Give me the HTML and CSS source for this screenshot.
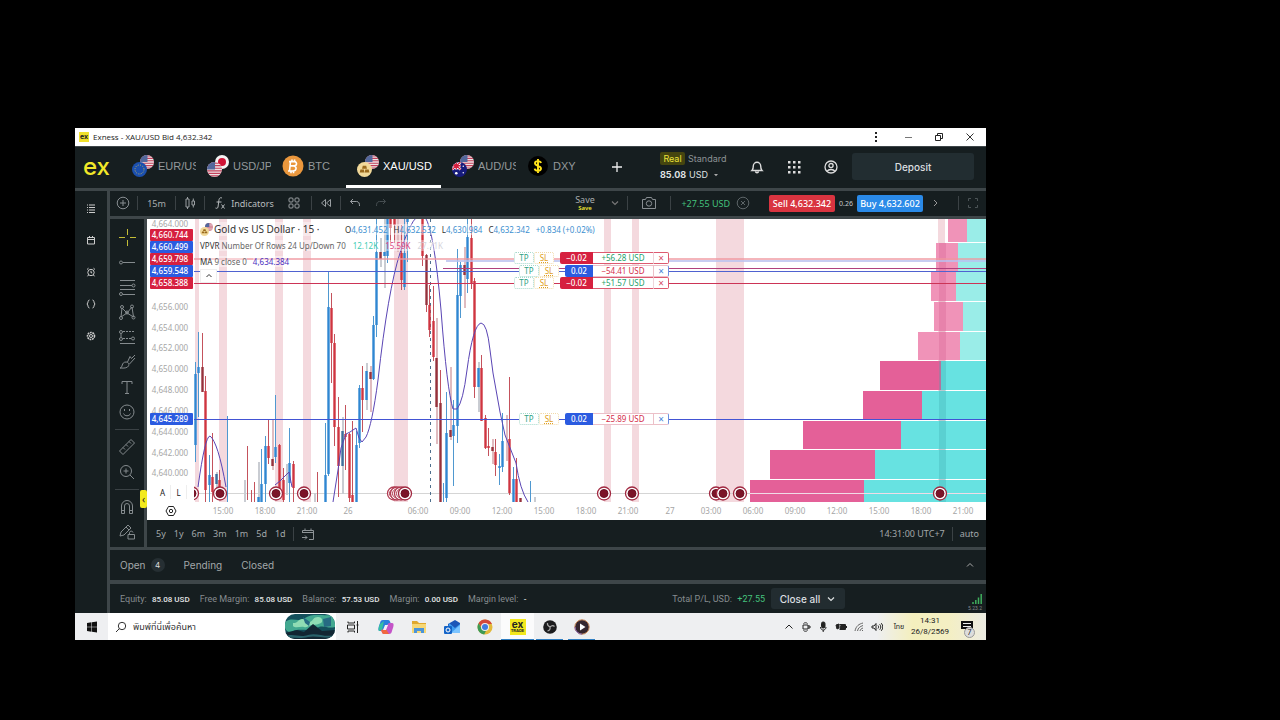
FILE: index.html
```html
<!DOCTYPE html>
<html lang="en">
<head>
<meta charset="utf-8">
<title>Exness - XAU/USD Bid 4,632.342</title>
<link rel="stylesheet" href="styles.css">
</head>
<body>
<svg class="defs" aria-hidden="true">
  <defs>
    <clipPath id="disc"><circle cx="7" cy="7" r="7"/></clipPath>
    <symbol id="us" viewBox="0 0 14 14"><g clip-path="url(#disc)"><path fill="#eee3e6" d="M0 0h14v14H0z"/><path stroke="#c2405a" stroke-width="1.1" d="M0 1h14M0 3.4h14M0 5.8h14M0 8.2h14M0 10.6h14M0 13h14"/><path fill="#53689c" d="M0 0h7.5v7H0z"/></g></symbol>
    <symbol id="eu" viewBox="0 0 14 14"><circle cx="7" cy="7" r="7" fill="#1b4fae"/><circle cx="7" cy="7" r="4.2" fill="none" stroke="#d9c14a" stroke-width=".8" stroke-dasharray=".9 1.3"/></symbol>
    <symbol id="jp" viewBox="0 0 14 14"><circle cx="7" cy="7" r="7" fill="#f4f4f4"/><circle cx="7" cy="7" r="4" fill="#cf1436"/></symbol>
    <symbol id="gold" viewBox="0 0 14 14"><circle cx="7" cy="7" r="7" fill="#f1d99a"/><path fill="#9a6a1d" d="M5.4 3.6h3.2l.7 2.8H4.7zM3.2 7h3.2l.5 2.8H2.5zM7.7 7h3.2l.7 2.8H7.2z"/></symbol>
    <symbol id="au" viewBox="0 0 14 14"><g clip-path="url(#disc)"><path fill="#171b7c" d="M0 0h14v14H0z"/><path stroke="#fff" stroke-width="2.4" d="M0 0l8 7M8 0L0 7M4 0v7M0 3.5h8"/><path stroke="#d5203f" stroke-width="1.2" d="M0 0l8 7M8 0L0 7M4 0v7M0 3.5h8"/><circle cx="4" cy="10.5" r="1.2" fill="#fff"/><circle cx="10.5" cy="4" r=".7" fill="#fff"/><circle cx="10.5" cy="10" r=".7" fill="#fff"/></g></symbol>
    <symbol id="caret" viewBox="0 0 10 10"><path fill="none" stroke="currentColor" stroke-width="1.2" d="M2 3.5l3 3 3-3"/></symbol>
  </defs>
</svg>
<div class="window">
  <header class="titlebar">
    <span class="app-badge">ex</span>
    <span class="title">Exness - XAU/USD Bid 4,632.342</span>
    <button class="wc" aria-label="Menu"><svg width="10" height="10"><path fill="#222" d="M3 0h2v2H3zM3 4h2v2H3zM3 8h2v2H3z"/></svg></button>
    <button class="wc" aria-label="Minimize"><svg width="10" height="10"><path stroke="#777" d="M2 5.5h7"/></svg></button>
    <button class="wc" aria-label="Restore"><svg width="10" height="10" fill="none" stroke="#222"><path d="M1.500 3.500h5v5h-5zM3.500 3V1.500h5v5H7"/></svg></button>
    <button class="wc" aria-label="Close"><svg width="10" height="10"><path stroke="#333" d="M1.500 1.500l7 7M8.500 1.500l-7 7"/></svg></button>
  </header>

  <nav class="header">
    <a class="logo" href="#">ex</a>
    <div class="tabs">
      <button class="tab"><svg width="22" height="22"><use href="#us" x="8" y="0" width="14" height="14"/><use href="#eu" x="0" y="7" width="15" height="15"/></svg><span>EUR/USD</span></button>
      <button class="tab"><svg width="22" height="22"><use href="#jp" x="8" y="0" width="14" height="14"/><use href="#us" x="0" y="7" width="15" height="15"/></svg><span>USD/JPY</span></button>
      <button class="tab"><svg width="22" height="22"><circle cx="11" cy="11" r="10.500" fill="#ea973d"/><path fill="none" stroke="#fff" stroke-width="1.600" d="M8.500 6.500l-1 9.500M7 6.600h5.500c3 .3 2.500 4.200-.5 4.300H8.500M11.500 11c4 .4 3 5-.5 5H6M10 4.500v2M12.600 4.500v2M9 16v2.200M11.500 16v2.200"/></svg><span>BTC</span></button>
      <button class="tab active"><svg width="22" height="22"><use href="#us" x="8" y="0" width="14" height="14"/><use href="#gold" x="0" y="7" width="15" height="15"/></svg><span>XAU/USD</span></button>
      <button class="tab"><svg width="22" height="22"><use href="#us" x="8" y="0" width="14" height="14"/><use href="#au" x="0" y="7" width="15" height="15"/></svg><span>AUD/USD</span></button>
      <button class="tab"><svg width="22" height="22"><circle cx="11" cy="11" r="10" fill="#000"/><path fill="none" stroke="#ffe21a" stroke-width="1.900" d="M14 8c-.5-2.500-6-2.500-6 .3 0 3 6 2.100 6 5.300 0 2.900-6 2.900-6.300 0M11 4v14"/></svg><span>DXY</span></button>
    </div>
    <button class="add" aria-label="Add instrument"><svg width="12" height="12"><path stroke="#eee" stroke-width="1.300" d="M6 1v10M1 6h10"/></svg></button>
    <div class="account">
      <div><span class="real">Real</span><span class="std">Standard</span></div>
      <button class="balance"><b>85.08</b> USD <svg width="10" height="10"><path fill="#aaa" d="M3 4h4L5 6.200z"/></svg></button>
    </div>
    <button class="hicon" aria-label="Notifications"><svg width="14" height="14" fill="none" stroke="#ddd" stroke-width="1.400"><path d="M2 10.500c1.300-1.200 1.300-2.500 1.300-4.500a3.700 3.700 0 017.400 0c0 2 0 3.300 1.300 4.500zM5.500 11.500c.3 1.600 2.700 1.600 3 0"/></svg></button>
    <button class="hicon" aria-label="Apps"><svg width="14" height="14" fill="#ddd"><path d="M1 1h2.500v2.500H1zM6 1h2.500v2.500H6zM11 1h2.500v2.500H11zM1 6h2.500v2.500H1zM6 6h2.500v2.500H6zM11 6h2.500v2.500H11zM1 11h2.500v2.500H1zM6 11h2.500v2.500H6zM11 11h2.500v2.500H11z"/></svg></button>
    <button class="hicon" aria-label="Profile"><svg width="14" height="14" fill="none" stroke="#ddd" stroke-width="1.300"><circle cx="7" cy="7" r="6"/><circle cx="7" cy="5.600" r="2.100"/><path d="M3 11.300c1.600-2.400 6.400-2.400 8 0"/></svg></button>
    <button class="deposit">Deposit</button>
  </nav>

  <div class="body">
    <aside class="rail">
      <button aria-label="Watchlist"><svg width="10" height="10" stroke="#ccc"><path d="M3 2h6M3 4.500h6M3 7h6M3 9.500h6M1 2h1M1 4.500h1M1 7h1M1 9.500h1"/></svg></button>
      <button aria-label="Calendar"><svg width="10" height="10" fill="none" stroke="#ccc"><path d="M1.500 2.500h7v6.500h-7zM1.500 4.500h7M3.500 1v2M6.500 1v2"/></svg></button>
      <button aria-label="Alerts"><svg width="10" height="10" fill="none" stroke="#ccc"><circle cx="5" cy="5.500" r="3.200"/><path d="M5 3.800v2h1.200M1 2.500l1.500-1.300M9 2.500L7.500 1.200M2.500 8l-1 1.300M7.500 8l1 1.300"/></svg></button>
      <button aria-label="Scripts"><svg width="10" height="10" fill="none" stroke="#ccc"><path d="M3.500 1C1.500 1 2.500 4 1 5c1.500 1 .5 4 2.500 4M6.500 1c2 0 1 3 2.500 4-1.500 1-.5 4-2.500 4"/></svg></button>
      <button aria-label="Settings"><svg width="10" height="10" fill="none" stroke="#ccc"><circle cx="5" cy="5" r="1.500"/><circle cx="5" cy="5" r="3.500" stroke-width="1.600" stroke-dasharray="1.800 .7"/></svg></button>
    </aside>

    <main class="main">
      <div class="toolbar">
        <button class="w26" aria-label="Add symbol"><svg width="14" height="14" fill="none" stroke="#888e92"><circle cx="7" cy="7" r="5.800"/><path d="M7 4v6M4 7h6"/></svg></button><i class="sep"></i>
        <button class="w35">15m</button><i class="sep"></i>
        <button class="w26" aria-label="Chart style"><svg width="12" height="14" fill="none" stroke="#9a9fa2"><path d="M2 3h3v8H2zM3.500 1v2M3.500 11v2M8 5h2.500v4H8zM9.300 2.500V5M9.300 9v2.500"/></svg></button><i class="sep"></i>
        <button class="ind"><svg width="12" height="14" fill="none" stroke="#b4b8ba"><path d="M8 2C5.500 1 5 3 4.800 5L4 11c-.3 1.600-1.500 1.500-2.500 1M2.500 6h5M7.500 8.500l3 4M10.500 8.500l-3 4"/></svg>Indicators</button>
        <button class="w32" aria-label="Layouts"><svg width="12" height="12" fill="none" stroke="#9a9fa2"><rect x="1" y="1" width="4" height="4" rx="1"/><rect x="7" y="1" width="4" height="4" rx="1"/><rect x="1" y="7" width="4" height="4" rx="1"/><rect x="7" y="7" width="4" height="4" rx="1"/></svg></button><i class="sep"></i>
        <button class="w26" aria-label="Replay"><svg width="12" height="10" fill="none" stroke="#9a9fa2"><path d="M5.500 1.500v7L1.500 5zM10.500 1.500v7L6.500 5z"/></svg></button><i class="sep"></i>
        <button class="w26" aria-label="Undo"><svg width="12" height="10" fill="none" stroke="#9a9fa2"><path d="M4 1L1.500 3.500 4 6M1.500 3.500h6c2.500 0 3 2 3 4.500"/></svg></button>
        <button class="w26" aria-label="Redo"><svg width="12" height="10" fill="none" stroke="#454d50"><path d="M8 1l2.500 2.500L8 6M10.500 3.500h-6c-2.500 0-3 2-3 4.500"/></svg></button>
        <span class="grow"></span>
        <button class="save"><span>Save</span><em>Save</em></button>
        <button class="w22" aria-label="Save menu"><svg width="10" height="10" color="#777"><use href="#caret"/></svg></button><i class="sep"></i>
        <button class="w40" aria-label="Snapshot"><svg width="16" height="14" fill="none" stroke="#888e92"><path d="M1.500 3.500h3l1-2h5l1 2h3v9h-13z"/><circle cx="8" cy="7.500" r="2.700"/></svg></button><i class="sep"></i>
        <span class="pl">+27.55 USD</span>
        <button class="w26" aria-label="Close positions"><svg width="14" height="14" fill="none" stroke="#5d6568"><circle cx="7" cy="7" r="5.800"/><path d="M5 5l4 4M9 5l-4 4"/></svg></button>
        <button class="trade sell">Sell 4,632.342</button>
        <span class="spread">0.26</span>
        <button class="trade buy">Buy 4,632.602</button>
        <button class="chev" aria-label="Expand"><svg width="10" height="10" fill="none" stroke="#999"><path d="M3 2l3 3-3 3"/></svg></button><i class="sep"></i>
        <button class="w26" aria-label="Fullscreen"><svg width="12" height="12" fill="none" stroke="#4b5356"><path d="M1.500 4V1.500H4M8 1.500h2.500V4M10.500 8v2.500H8M4 10.500H1.500V8"/></svg></button>
      </div>

      <div class="work">
        <div class="tools">
          <button class="picked" aria-label="Crosshair"><svg width="18" height="18"><path d="M9.500 1v6M9.500 12v6M1 9.500h6M12 9.500h6"/></svg></button>
          <button aria-label="Trend line"><svg width="18" height="18"><circle cx="3" cy="9.500" r="1.500"/><path d="M5 9.500h12"/></svg></button>
          <button aria-label="Fibonacci"><svg width="18" height="18"><path d="M2 2.500h15M2 7.500h12M2 11.500h15M5 16.500h12"/><circle cx="15.500" cy="7.500" r="1.500"/><circle cx="3" cy="16" r="1.500"/></svg></button>
          <button aria-label="Patterns"><svg width="18" height="18"><path d="M3 14L4 5l5 5 5-6 1.500 10-6.500-4z"/><circle cx="3" cy="15" r="1.500"/><circle cx="4" cy="4" r="1.500"/><circle cx="9" cy="9.500" r="1.500"/><circle cx="14" cy="3.500" r="1.500"/><circle cx="15.500" cy="14.500" r="1.500"/></svg></button>
          <button aria-label="Projection"><svg width="18" height="18"><path d="M5 3.500h12M5 10.500h8" stroke-dasharray="2 1"/><circle cx="3" cy="4" r="1.500"/><circle cx="3" cy="11" r="1.500"/><circle cx="15" cy="10.500" r="1.500"/><path d="M3 6v3M2 15.500h15"/></svg></button>
          <button aria-label="Brush"><svg width="18" height="18"><path d="M2 15c3 0 1-6 6-6 3 0 4 3 1.500 5-2 1.500-5 1-7.500 1zM9.500 9L12 3.500l1.500 2 3.500-3.500M11.500 11L17 5"/></svg></button>
          <button aria-label="Text"><svg width="18" height="18"><path d="M4 6V3.500h10V6M9 3.500v12M7 15.500h4"/></svg></button>
          <button aria-label="Emoji"><svg width="18" height="18"><circle cx="9" cy="9" r="7"/><path d="M5.500 10.500c1 3 6 3 7 0M6.500 6v2M11.500 6v2"/></svg></button>
          <hr>
          <button aria-label="Measure"><svg width="18" height="18"><path d="M1.500 13L13 1.500 16.500 5 5 16.500zM5 9.500l2 2M8 6.500l2 2M11 3.500l2 2"/></svg></button>
          <button aria-label="Zoom"><svg width="18" height="18"><circle cx="8" cy="8" r="5.500"/><path d="M12 12l4 4M8 5.500v5M5.500 8h5"/></svg></button>
          <hr>
          <button aria-label="Magnet"><svg width="18" height="18"><path d="M3.500 15.500V8a5.500 5.500 0 0111 0v7.500h-3V8a2.500 2.500 0 00-5 0v7.500zM3.500 12.500h3M11.500 12.500h3"/></svg></button>
          <button aria-label="Lock drawings"><svg width="18" height="18"><path d="M2 13l1-4 7-7 3 3-7 7zM8 4l3 3M10 11.500h6.500v4.500H10zM11.500 11.500v-2a1.800 1.800 0 013.500 0"/></svg></button>
        </div>

        <div class="chartcol">
          <div class="chart">
            <svg class="plot" id="plot" viewBox="147 219 839 301" preserveAspectRatio="xMinYMin meet" role="img" aria-label="XAU/USD 15 minute chart"></svg>
            <div class="legend">
              <p class="l1"><svg width="13" height="13"><use href="#us" x="5" y="0" width="8" height="8"/><use href="#gold" x="0" y="4" width="9" height="9"/></svg><strong>Gold vs US Dollar · 15 ·</strong><span class="ohlc"><span>O<b>4,631.452</b></span><span>H<b>4,632.532</b></span><span>L<b>4,630.984</b></span><span>C<b>4,632.342</b></span><b>+0.834 (+0.02%)</b></span></p>
              <p class="l2"><span>VPVR <i>Number Of Rows 24 Up/Down 70</i></span><span class="up">12.12K</span><span class="dn">15.59K</span><span class="tot">27.71K</span></p>
              <p class="l3"><span>MA <i>9 close 0</i></span><span class="ma">4,634.384</span></p>
              <button class="fold" aria-label="Collapse legend"><svg width="10" height="10" fill="none" stroke="#333"><path d="M2.500 6l2.500-2.500L7.500 6"/></svg></button>
            </div>
            <div class="order o1 short"><button class="tp">TP</button><button class="sl">SL</button><span class="qty">−0.02</span><span class="pnl pos">+56.28 USD</span><button class="x" aria-label="Close order">×</button></div>
            <div class="order o2 long"><button class="tp">TP</button><button class="sl">SL</button><span class="qty">0.02</span><span class="pnl neg">−54.41 USD</span><button class="x" aria-label="Close order">×</button></div>
            <div class="order o3 short"><button class="tp">TP</button><button class="sl">SL</button><span class="qty">−0.02</span><span class="pnl pos">+51.57 USD</span><button class="x" aria-label="Close order">×</button></div>
            <div class="order o4 long"><button class="tp">TP</button><button class="sl">SL</button><span class="qty">0.02</span><span class="pnl neg">−25.89 USD</span><button class="x" aria-label="Close order">×</button></div>
            <div class="scale"><button>A</button><button>L</button></div>
            <button class="gear" aria-label="Chart settings"><svg width="12" height="12" fill="none" stroke="#222"><path d="M3.500 1.500h5L11 6l-2.500 4.500h-5L1 6z"/><circle cx="6" cy="6" r="1.700"/></svg></button>
            <button class="handle" aria-label="Toggle tools">‹</button>
          </div>
          <div class="range">
            <button>5y</button><button>1y</button><button>6m</button><button>3m</button><button>1m</button><button>5d</button><button>1d</button><i class="sep"></i>
            <button aria-label="Go to date"><svg width="14" height="14" fill="none" stroke="#8d9396"><path d="M1.500 6V3.500h11v9H8M1.500 5.500h11M4 1.500v2M10 1.500v2M1 10.500h5M4 8.500l2 2-2 2"/></svg></button>
            <span class="grow"></span>
            <button>14:31:00 UTC+7</button><i class="sep"></i><button>auto</button>
          </div>
        </div>
      </div>

      <div class="positions">
        <button>Open <span class="count">4</span></button><button>Pending</button><button>Closed</button>
        <span class="grow"></span>
        <button class="up" aria-label="Expand panel"><svg width="10" height="10" fill="none" stroke="#aaa"><path d="M2 6.500l3-3 3 3"/></svg></button>
      </div>

      <footer class="status">
        <span>Equity: <b>85.08 USD</b></span><span>Free Margin: <b>85.08 USD</b></span><span>Balance: <b>57.53 USD</b></span><span>Margin: <b>0.00 USD</b></span><span>Margin level: <b>-</b></span>
        <span class="grow"></span>
        <span class="total">Total P/L, USD: <b>+27.55</b></span>
        <button class="closeall">Close all <svg width="10" height="10"><use href="#caret"/></svg></button>
        <span class="signal"><svg width="10" height="10" stroke="#3fae5c" stroke-width="1.500"><path d="M1 8v2M3.800 6v4M6.500 3.500V10M9.200 0v10"/></svg><small>5.23.2</small></span>
      </footer>
    </main>
  </div>

  <div class="taskbar">
    <button class="start" aria-label="Start"><svg width="12" height="12" fill="#111"><path d="M1 2l4.500-.7v4.400H1zM6 1.200l5-.8v5.300H6zM1 6.300h4.500v4.400L1 10zM6 6.300h5v5.300l-5-.8z"/></svg></button>
    <label class="search"><svg width="12" height="12" fill="none" stroke="#333"><circle cx="7" cy="5" r="3.700"/><path d="M4.300 7.700L1 11"/></svg><input type="text" placeholder="พิมพ์ที่นี่เพื่อค้นหา" aria-label="Search">
      <svg width="51" height="26" viewBox="0 0 51 26"><clipPath id="pill"><rect width="50" height="25" rx="10"/></clipPath><g clip-path="url(#pill)"><path fill="#14505c" d="M0 0h51v26H0z"/><path fill="#42a890" d="M0 8C8 2 12 9 20 4s14-2 30-3v12c-8 2-12-3-18 1S14 14 8 17 0 14 0 14z"/><path fill="#8fdcb4" d="M8 9c4 1 6-5 10-4s3 5 7 3 3-5 8-5 5 5 3 6-6 2-9 2-4 3-8 2-8 2-11-1z"/><path fill="#266b83" d="M18 3l7 5-1 4-4-3zM38 5l8-2v9l-7 1z"/><path fill="#122633" d="M0 19l12-3 7 2 9-8 9 7 14-1v10H0z"/><path fill="#28616a" d="M0 22c10-3 14 2 23-1s16 3 28 0v2c-12 2-20-2-28 0s-15 0-23 1z"/></g></svg>
    </label>
    <div class="apps">
      <button aria-label="Task view"><svg width="14" height="14" fill="none" stroke="#222"><path d="M2 1.500V3h6.500V1.500M2 12.500V11h6.500v1.500M1.500 5h7v4h-7zM11.500 1v12M10.500 5h2"/></svg></button>
      <button aria-label="Copilot"><svg width="18" height="18"><path fill="#2a7fdc" d="M6 2h5c2 0 2 2 3 4l-4 1c-2 0-2 5-4 6H3c-3 0-1-5 0-8 .5-2 1-3 3-3z"/><path fill="#35c0a0" d="M3 6l4-3-2 9-3 1c-1-1 0-5 1-7z"/><path fill="#c454c8" d="M12 16H7c-2 0-2-2-3-4l4-1c2 0 2-5 4-6h3c3 0 1 5 0 8-.5 2-1 3-3 3z"/><path fill="#f0683f" d="M4 12l5-1 3 5H7c-2 0-2-2-3-4z"/><path fill="#f4f0f6" d="M8 7h3l-2 5H6z"/></svg></button>
      <button aria-label="Files"><svg width="18" height="18"><path fill="#e0a82e" d="M2 3h5l2 2h7v3H2z"/><path fill="#f7d774" d="M2 6h14v9H2z"/><path fill="#4b94d8" d="M4 15v-5h10v5h-3v-2H7v2z"/></svg></button>
      <button aria-label="Mail"><svg width="18" height="18"><path fill="#1c56b8" d="M5 6l7-4 5 3v9H5z"/><path fill="#3f9df0" d="M6 5l6 5 5-4v9H5z"/><path fill="#7cc4ff" d="M17 7l-9 8h9z"/><rect x="1" y="8" width="8" height="8" rx="1" fill="#1464c8"/><circle cx="5" cy="12" r="2" fill="none" stroke="#fff"/></svg></button>
      <button aria-label="Browser"><svg width="18" height="18"><circle cx="9" cy="9" r="7.500" fill="#e2b93a"/><path fill="#d3483a" d="M2.500 5.300A7.500 7.500 0 0116 6H9L6 10.500z"/><path fill="#3c9a55" d="M2.500 5.300l4 6.500h4L8.200 16.500A7.500 7.500 0 012.500 5.300z"/><circle cx="9" cy="9" r="4" fill="#eee"/><circle cx="9" cy="9" r="3" fill="#3f7de0"/></svg></button>
      <button class="on" aria-label="Exness"><span class="exicon">ex<small>TRADE</small></span></button>
      <button class="run" aria-label="OBS"><svg width="16" height="16"><circle cx="8" cy="8" r="6.800" fill="#1c1c1e"/><path fill="none" stroke="#aaa" stroke-width="1.200" d="M8 8c-2-1-3-2-2.500-4M8 8c1.500-1.500 3-2 4.500-.5M8 8c.5 2-.5 3.500-2.500 4"/></svg></button>
      <button class="run" aria-label="Player"><svg width="18" height="18"><circle cx="9" cy="9" r="7.200" fill="#35262f" stroke="#c98a5c"/><path fill="none" stroke="#8468b8" d="M2 9a7.200 7.200 0 007 7.200"/><path fill="#fff" d="M7 5.500L12.500 9 7 12.500z"/></svg></button>
    </div>
    <span class="grow"></span>
    <div class="tray">
      <svg width="10" height="10"><path d="M1.500 6.500L5 3l3.500 3.500"/></svg>
      <svg width="10" height="12"><path d="M2 4h5v4H2zM7 5h2v2H7M2.500 2.500c1-1 3-1 4 0M2.500 9.500c1 1 3 1 4 0"/></svg>
      <svg width="10" height="12"><rect x="3.500" y="1" width="3.500" height="6" rx="1.500" fill="#222"/><path d="M2.500 6c0 4 5.500 4 5.500 0M5.200 9v2"/></svg>
      <svg width="12" height="10"><path fill="#222" d="M6 3h4v4H5zM1 3l3-1v4l-2 1z"/><path d="M4.500 2.500h6v5h-6M11.500 4v2"/></svg>
      <svg width="10" height="10"><path d="M1 9C2 4 5 2 9 1M3.500 9c.5-3 2.500-4.500 5.500-5.500M6 9c.3-1.500 1.300-2.500 3-3M8 9l1-1"/></svg>
      <svg width="12" height="10"><path d="M1 4h2l2-2.500v7L3 6H1zM7 3.500c.8 1 .8 2 0 3M8.700 2.300c1.500 1.800 1.500 3.600 0 5.400M10.300 1.200c2 2.500 2 5 0 7.600"/></svg>
      <span class="lang">ไทย</span>
    </div>
    <div class="date"><span>14:31</span><span>26/8/2569</span></div>
    <button class="notif" aria-label="Notifications"><svg width="20" height="18"><path fill="#111" d="M2 3h12v8H9l-3 3v-3H2z"/><path stroke="#eee" d="M4 5.500h8M4 8.500h8"/></svg><span>7</span></button>
  </div>
</div>
<script src="chart.js"></script>
</body>
</html>
```
FILE: styles.css
```css
* { box-sizing: border-box; }
body {
  margin: 0;
  min-height: 100vh;
  padding: 128px 294px 80px 75px;
  background: #000;
  font-family: "Inter", "Liberation Sans", sans-serif;
  font-size: 10px;
  color: #a3a8aa;
}
button { border: 0; padding: 0; background: none; color: inherit; font: inherit; display: flex; align-items: center; justify-content: center; white-space: nowrap; }
svg { flex: none; display: block; }
.defs { position: absolute; width: 0; height: 0; }
.grow { flex: 1; }
.window { background: #161e20; display: flex; flex-direction: column; }

.titlebar { height: 18px; background: #fff; color: #222; display: flex; align-items: center; padding: 0 1px 1px 4px; font: 8px "Open Sans", "Noto Sans", sans-serif; }
.app-badge { width: 10px; height: 10px; background: #f0e02a; color: #222; font: bold 7px/9px "Inter", sans-serif; text-align: center; }
.title { flex: 1; padding-left: 4px; }
.wc { width: 31px; height: 17px; }

.header { height: 45px; display: flex; align-items: center; border-bottom: 3px solid #3e4649; border-top: 1px solid #3e4649; }
.header > :not(.tabs) { margin-bottom: 2px; }
.logo { width: 46px; padding-left: 8px; color: #f2e829; font-size: 24px; line-height: 24px; font-weight: 500; text-decoration: none; }
.tabs { display: flex; height: 100%; }
.tab { width: 75px; padding-left: 11px; gap: 4px; justify-content: flex-start; font: 11px "Liberation Sans", sans-serif; color: #94999b; border-bottom: 3px solid transparent; }
.tab span { flex: 1; overflow: hidden; text-align: left; }
.tab.active { width: 95px; color: #fff; border-bottom-color: #fff; }
.add { width: 51px; height: 24px; }
.account { flex: 1; padding-left: 18px; font-size: 9px; line-height: 13px; }
.account > div { display: flex; gap: 3px; padding-bottom: 3px; }
.real { width: 25px; background: #45450f; color: #ece33c; border-radius: 2px; text-align: center; }
.std { color: #8d9395; }
.balance { gap: 3px; color: #dfe1e2; }
.hicon { width: 37px; height: 24px; }
.deposit { width: 122px; height: 27px; margin: 0 12px 0 3px; background: #222d31; border-radius: 3px; color: #dcdfe0; font-weight: 500; }

.body { display: flex; }
.rail { width: 35px; border-right: 3px solid #3e4649; padding-top: 1px; display: flex; flex-direction: column; }
.rail button { height: 32px; }
.main { flex: 1; min-width: 0; display: flex; flex-direction: column; }

.toolbar { height: 28px; padding-bottom: 1px; display: flex; align-items: center; border-bottom: 3px solid #3e4649; font: 9px "Noto Sans", "Open Sans", sans-serif; color: #a9adaf; }
.toolbar button { height: 24px; }
.sep { width: 1px; height: 14px; margin: 0 1px; background: #3b4245; }
.toolbar .w22 { width: 22px; }
.toolbar .w26 { width: 26px; }
.toolbar .w32 { width: 32px; }
.toolbar .w35 { width: 35px; }
.toolbar .w40 { width: 40px; }
.toolbar .ind { width: 72px; padding-left: 4px; gap: 5px; color: #b9bdbf; }
.toolbar .save { width: 38px; flex-direction: column; line-height: 10px; }
.save em { font-style: normal; font-size: 6px; line-height: 7px; font-weight: 600; color: #f0e632; }
.pl { width: 58px; text-align: right; color: #43c07c; }
.toolbar .trade { width: 66px; height: 17px; margin-left: 13px; border-radius: 2px; background: #d93440; color: #fff; font-weight: 500; }
.toolbar .buy { margin-left: 0; background: #2a8ae8; }
.spread { width: 22px; text-align: center; font-size: 7px; color: #c6c9ca; }
.toolbar .chev { width: 34px; padding-right: 8px; }

.work { display: flex; border-bottom: 3px solid #3e4649; }
.tools { width: 37px; border-right: 3px solid #3e4649; padding-top: 5px; }
.tools button { width: 100%; height: 25px; }
.tools svg { fill: none; stroke: #858b8e; }
.tools .picked svg { stroke: #c4bd36; }
.tools hr { width: 24px; height: 1px; margin: 5px auto 4px; border: 0; background: #3b4245; }
.chartcol { flex: 1; min-width: 0; }
.chart { position: relative; background: #fff; border-radius: 2px 0 0 0; font: 8px "Noto Sans", "Open Sans", sans-serif; }
.plot { width: 100%; height: auto; }
.plot text { font: 8px "Noto Sans", "Open Sans", sans-serif; fill: #a6a6a6; text-anchor: middle; dominant-baseline: central; }
.plot .badge { fill: #fff; font-weight: 500; }

.legend { position: absolute; left: 53px; top: 2px; color: #333; }
.legend p { margin: 0; height: 16px; display: flex; align-items: center; white-space: nowrap; }
.legend p > * { background: rgba(255, 255, 255, .4); }
.legend i { font-style: normal; color: #666; }
.legend .l1 { gap: 1px; }
.l1 strong { font-weight: 400; font-size: 10px; width: 130px; }
.ohlc { display: flex; gap: 6px; }
.ohlc b { font-weight: 400; color: #3d8fd0; }
.l2 { gap: 7px; }
.legend .up { color: #43cdb4; }
.legend .dn { color: #dc3f80; }
.legend .tot { color: #d5d5dc; }
.l3 { gap: 6px; }
.legend .ma { color: #4a2fc0; }
.legend .fold { width: 17px; height: 14px; background: #fff; border: 1px solid #eee; }

.order { position: absolute; left: 367px; width: 155px; height: 12px; display: flex; line-height: 10px; }
.order.long { left: 372px; width: 150px; }
.o1 { top: 33px; }
.o2 { top: 46px; }
.o3 { top: 58px; }
.o4 { top: 194px; }
.tp, .sl { width: 20px; background: #fff; border: 1px dotted #a5d9cb; border-radius: 2px; }
.tp { color: #2fa283; }
.sl { color: #e0a022; border-color: #f2d9a8; text-decoration: underline dotted; margin-right: 6px; }
.order .qty { width: 33px; background: #d6203f; color: #fff; text-align: center; border-radius: 2px 0 0 2px; line-height: 12px; font-weight: 500; }
.order.long .qty { width: 28px; background: #2b5be0; }
.pnl { width: 60px; background: #fff; border: 1px solid #dd5a70; border-width: 1px 0; text-align: center; }
.long .pnl { border-color: #ecc0c8; }
.pos { color: #26a069; }
.neg { color: #d42e49; }
.order .x { width: 16px; background: #fff; border: 1px solid #dd5a70; border-left-color: #eed5da; border-radius: 0 2px 2px 0; color: #d6506a; font-size: 10px; }
.order.long .x { color: #4b86d8; border-color: #ecc0c8; border-right-color: #6d8fe0; }
.scale { position: absolute; left: 8px; top: 266px; display: flex; color: #222; }
.scale button { width: 16px; height: 14px; border-right: 1px solid #eee; }
.gear { position: absolute; left: 18px; top: 286px; }
.handle { position: absolute; left: -7px; top: 271px; width: 7px; height: 18px; background: #f3ea1e; border-radius: 2px; color: #222; font-size: 10px; }

.range { height: 27px; padding: 0 7px 0 9px; display: flex; align-items: center; gap: 8px; font: 9px "Noto Sans", "Open Sans", sans-serif; color: #a3a8aa; }
.range .sep { margin: 0 -1px; }
.range button { height: 20px; }

.positions { height: 34px; padding: 0 6px 0 10px; display: flex; align-items: center; gap: 19px; border-bottom: 4px solid #3e4649; }
.positions button { gap: 5px; height: 24px; }
.count { width: 14px; height: 14px; border-radius: 7px; background: #262f33; color: #ddd; font: 8px/14px "Inter", sans-serif; text-align: center; }
.positions .up { width: 20px; }

.status { height: 29px; padding-left: 10px; display: flex; align-items: center; gap: 10px; font: 9px "Roboto", sans-serif; color: #868c8f; white-space: nowrap; }
.status b { color: #e3e5e6; font-weight: 500; font-size: 8px; padding-left: 3px; }
.status .total { margin-right: -4px; }
.status .total b { color: #45c27d; font-weight: 400; font-size: 9px; }
.closeall { width: 74px; height: 21px; gap: 6px; background: #222c30; border-radius: 3px; color: #dcdfe0; font: 500 10px "Inter", sans-serif; }
.signal { width: 131px; padding-right: 4px; display: flex; flex-direction: column; align-items: flex-end; gap: 2px; padding-top: 7px; }
.signal small { font-size: 5px; line-height: 5px; }

.taskbar { height: 27px; display: flex; align-items: center; background: linear-gradient(90deg, #eeeff1 0 88%, #f4efbd 92%, #f4efc4 96%, #ecebe2); color: #222; }
.start { width: 33px; height: 27px; }
.search { width: 228px; height: 27px; padding-left: 7px; display: flex; align-items: center; gap: 6px; background: #fff; }
.search input { flex: 1; min-width: 0; height: 20px; border: 0; padding: 0; background: none; font: 9px "Noto Sans Thai", "Noto Sans", sans-serif; color: #333; }
.search input::placeholder { color: #333; opacity: 1; }
.apps { display: flex; }
.apps button { width: 33px; height: 27px; border-top: 1px solid transparent; border-bottom: 1px solid transparent; }
.apps .on { background: #fbfbfc; border-bottom-color: #2f7ec2; }
.apps .run { width: 27px; margin: 0 3px 0 2px; border-bottom-color: #2f7ec2; }
.exicon { width: 16px; height: 16px; background: #f3e81e; color: #222; font-weight: 700; font-size: 10px; line-height: 10px; text-align: center; }
.exicon small { display: block; font-size: 4px; line-height: 4px; }
.tray { display: flex; align-items: center; gap: 7px; }
.tray svg { fill: none; stroke: #222; }
.tray svg:nth-child(5) { stroke: #666; }
.lang { width: 18px; font: 7px "Noto Sans Thai", "Noto Sans", sans-serif; text-align: center; }
.date { width: 44px; padding-bottom: 1px; display: flex; flex-direction: column; align-items: center; font: 8px/11px "Roboto", sans-serif; }
.notif { position: relative; width: 34px; height: 24px; }
.notif span { position: absolute; right: 11px; bottom: 1px; width: 11px; height: 11px; border: 1px solid #999; border-radius: 6px; background: #ddd; font-size: 7px; line-height: 9px; }
```
FILE: chart.js
```js
const plot = document.getElementById('plot');
const LEFT = 194, RIGHT = 986, TOP = 219, BOTTOM = 502;
const out = [];
const rect = (x, y, w, h, fill, extra = '') =>
  out.push(`<rect x="${x}" y="${y}" width="${w}" height="${h}" fill="${fill}" ${extra}/>`);
const level = (x, y, colour, h = 1, extra = '') => rect(x, y, RIGHT - x, h, colour, extra);

// news sessions
[[195, 4], [219, 8], [275, 8], [303, 8], [394, 14], [604, 7], [632, 7], [716, 28], [938, 7]]
  .forEach(([x, w]) => rect(x, TOP, w, BOTTOM - TOP, '#f4d9de'));

// volume profile: top, bottom, start, split, strong
[[219, 242, 948, 967, 0], [243, 271, 936, 958, 0], [272, 301, 931, 956, 0], [302, 331, 934, 963, 0],
 [332, 360, 918, 960, 0], [361, 390, 880, 941, 1], [391, 420, 863, 922, 1], [421, 449, 803, 901, 1],
 [450, 479, 770, 875, 1], [480, 502, 750, 864, 1]].forEach(([t, b, s, m, strong]) => {
  rect(s, t, m - s, b - t, strong ? '#e46098' : '#f093b8');
  rect(m, t, RIGHT - m, b - t, strong ? '#67e2e1' : '#9aede8');
});
rect(939, 243, 7, 118, '#c9497f', 'opacity=".22"');
rect(939, 361, 7, 141, '#3ca4ac', 'opacity=".3"');

level(LEFT, 493, '#d5d5d5');
level(750, 493, '#f0dbe6');
out.push(`<path d="M430.5 ${TOP}V${BOTTOM}" stroke="#4e6f8d" stroke-dasharray="3 4"/>`);

// candles: x, high, low, open/close top, open/close bottom, colour, wick colour
const C = { b: '#2f87d2', r: '#cf3540', d: '#96323c', n: '#3d6f9c' };
const W = { b: '#4f98d0', r: '#c4525c', d: '#c4525c', n: '#4f98d0', g: '#c9ccd2', p: '#e0bcc0' };
[[195,362,462,374,445,'b'],[198,332,417,367,373,'b'],[202,333,392,367,392,'d'],[205,376,502,391,490,'r'],
 [209,455,502,475,485,'b'],[212,433,502,477,492,'r'],[216,472,492,474,484,'n','g'],[219,470,500,480,490,'r'],
 [227,416,502,0,0,'b'],[244,480,502,0,0,'n','g'],[247,446,500,0,0,'r'],[251,490,502,0,0,'r'],[254,482,502,0,0,'r'],
 [258,462,502,497,502,'b','g'],[261,449,502,484,502,'b'],[265,436,502,446,484,'b'],[268,419,464,446,458,'r'],
 [272,420,470,459,466,'d','p'],[275,395,463,447,457,'b'],[279,444,495,445,490,'r'],[283,468,502,480,500,'r'],
 [286,464,495,0,0,'n','g'],[289,428,502,463,483,'b'],[293,461,502,464,488,'r'],[314,493,502,0,0,'n','g'],
 [317,472,502,0,0,'r'],[325,423,502,475,502,'b'],[328,271,476,307,474,'b'],[331,293,383,308,343,'r'],
 [334,334,446,343,427,'r'],[338,397,497,427,466,'r'],[342,417,494,431,466,'n','g'],[345,405,470,434,437,'r'],
 [349,433,502,434,498,'r'],[352,421,502,495,502,'r'],[356,431,502,445,502,'b'],[359,385,448,388,443,'b'],
 [362,366,432,388,400,'r'],[366,363,410,371,400,'b','g'],[370,366,412,372,379,'d','p'],[373,316,380,325,379,'b'],
 [376,219,337,252,325,'b'],[380,238,267,252,259,'d','g'],[384,219,288,252,256,'b','g'],[387,219,263,219,256,'b'],
 [390,219,242,219,228,'r'],[394,219,243,219,225,'r'],[397,219,252,0,0,'r','p'],[401,225,290,253,280,'r'],
 [404,219,290,253,287,'b'],[407,219,262,219,222,'b'],[422,219,266,219,256,'r'],[426,254,312,255,305,'d'],
 [429,285,337,305,330,'r'],[433,286,361,321,357,'r'],[436,318,444,358,407,'d','p'],[440,370,502,403,502,'d'],
 [443,483,502,0,0,'b'],[446,392,502,433,498,'b'],[450,367,440,430,437,'d','p'],[453,400,486,425,436,'b'],
 [457,249,443,295,426,'b'],[460,262,318,265,296,'b'],[464,247,308,265,275,'d','p'],[467,219,293,237,279,'b'],
 [471,219,289,238,284,'r'],[474,278,398,281,387,'r'],[478,362,412,368,387,'b','g'],[481,355,421,368,421,'r'],
 [485,415,449,418,448,'r'],[488,428,456,446,448,'r'],[492,439,464,447,451,'d','p'],[495,439,476,452,465,'r'],
 [499,454,485,466,468,'b'],[502,413,472,441,467,'b'],[506,415,461,0,0,'r','p'],[509,377,495,439,493,'r'],
 [513,467,502,479,502,'b'],[516,458,502,479,502,'r'],[520,498,502,498,502,'d'],[530,481,502,0,0,'b'],
 [534,497,502,0,0,'n','g']].forEach(([x, hi, lo, t, b, c, w]) => {
  rect(x, hi, w ? 2 : 1, lo - hi, W[w || c]);
  if (b) rect(x - 0.7, t, 2.4, b - t, C[c]);
});

// moving average
out.push(`<path fill="none" stroke="#5a45b4" d="M198 487Q205 436 210 436Q218 442 226 487M275 485L280 481L289 472L292 487
 M333 502L338 470L341 448L346 434L350 432L356 428L359 438L362 442L366 437Q372 425 378 380Q388 290 400 253Q410 222 417 217
 M425 217Q434 230 441 310Q447 390 453 409H457Q463 402 467 370Q473 325 481 323Q487 323 490 350L493 373L500 412L505 435L516 463Q520 490 528 502"/>`);

// order lines
level(LEFT, 258, '#f0959e', 2, 'opacity=".7"');
level(446, 260, '#b9c0ef', 2, 'opacity=".8"');
level(443, 268, '#b0407c');
level(LEFT, 271, '#4f62d0');
level(LEFT, 283, '#cc3456');
level(LEFT, 419, '#4254d4');

// news markers
const dot = x => out.push(`<circle cx="${x}" cy="493.500" r="6.500" fill="#fff" stroke="#a12840" stroke-width="1.300"/><circle cx="${x}" cy="493.500" r="4" fill="#7c1428" stroke="#6d1024"/>`);
const ring = x => out.push(`<circle cx="${x}" cy="493.500" r="6.500" fill="#fff" stroke="#b03a50" stroke-width="1.300"/><circle cx="${x}" cy="493.500" r="4.500" fill="none" stroke="#b03a50"/>`);
[394, 397, 401].forEach(ring);
[192, 220, 276, 304, 405, 604, 632, 716, 723, 740, 940].forEach(dot);

// axes
rect(147, TOP, 47, 301, '#fff');
[['4,664.000', 223], ['4,656.000', 306], ['4,654.000', 327], ['4,652.000', 347], ['4,650.000', 368], ['4,648.000', 389],
 ['4,646.000', 410], ['4,644.000', 431], ['4,642.000', 452], ['4,640.000', 472]]
  .forEach(([t, y]) => out.push(`<text x="170" y="${y}">${t}</text>`));
[['4,660.744', 234, '#d6203f'], ['4,660.499', 246, '#2b5be0'], ['4,659.798', 258, '#d6203f'], ['4,659.548', 270, '#2b5be0'],
 ['4,658.388', 282, '#d6203f'], ['4,645.289', 418, '#2b5be0']].forEach(([t, y, c]) => {
  rect(150, y - 5, 43, 12, c, 'rx="1"');
  out.push(`<text class="badge" x="170" y="${y}">${t}</text>`);
});
[['15:00', 223], ['18:00', 265], ['21:00', 307], ['26', 348], ['06:00', 418], ['09:00', 460], ['12:00', 502], ['15:00', 544],
 ['18:00', 586], ['21:00', 628], ['27', 670], ['03:00', 711], ['06:00', 753], ['09:00', 795], ['12:00', 837], ['15:00', 879],
 ['18:00', 921], ['21:00', 963]].forEach(([t, x]) => out.push(`<text x="${x}" y="510">${t}</text>`));

plot.innerHTML = out.join('');
```
